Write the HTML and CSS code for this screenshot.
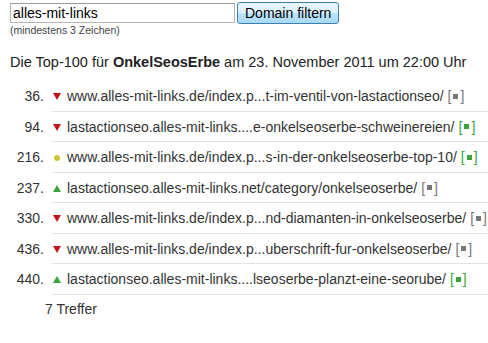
FILE: index.html
```html
<!DOCTYPE html>
<html lang="de">
<head>
  <meta charset="UTF-8">
  <title>Top-100 OnkelSeosErbe</title>
  <link rel="stylesheet" href="styles.css">
</head>
<body>

  <form class="filter" action="#" method="get">
    <div class="filter-row">
      <input type="text" name="domain" value="alles-mit-links">
      <button type="submit">Domain filtern</button>
    </div>
    <p class="hint">(mindestens 3 Zeichen)</p>
  </form>

  <h2 class="title">Die Top-100 für <b>OnkelSeosErbe</b> am 23. November 2011 um 22:00 Uhr</h2>

  <ol class="ranking">
    <li><span class="pos">36.</span><span class="entry"><i class="trend down"></i><a href="#">www.alles-mit-links.de/index.p...t-im-ventil-von-lastactionseo/</a> <span class="tag">[<span class="sq"></span>]</span></span></li>
    <li><span class="pos">94.</span><span class="entry"><i class="trend down"></i><a href="#">lastactionseo.alles-mit-links....e-onkelseoserbe-schweinereien/</a> <span class="tag on">[<span class="sq"></span>]</span></span></li>
    <li><span class="pos">216.</span><span class="entry"><i class="trend same"></i><a href="#">www.alles-mit-links.de/index.p...s-in-der-onkelseoserbe-top-10/</a> <span class="tag on">[<span class="sq"></span>]</span></span></li>
    <li><span class="pos">237.</span><span class="entry"><i class="trend up"></i><a href="#">lastactionseo.alles-mit-links.net/category/onkelseoserbe/</a> <span class="tag">[<span class="sq"></span>]</span></span></li>
    <li><span class="pos">330.</span><span class="entry"><i class="trend down"></i><a href="#">www.alles-mit-links.de/index.p...nd-diamanten-in-onkelseoserbe/</a> <span class="tag">[<span class="sq"></span>]</span></span></li>
    <li><span class="pos">436.</span><span class="entry"><i class="trend down"></i><a href="#">www.alles-mit-links.de/index.p...uberschrift-fur-onkelseoserbe/</a> <span class="tag">[<span class="sq"></span>]</span></span></li>
    <li><span class="pos">440.</span><span class="entry"><i class="trend up"></i><a href="#">lastactionseo.alles-mit-links....lseoserbe-planzt-eine-seorube/</a> <span class="tag on">[<span class="sq"></span>]</span></span></li>
  </ol>

  <p class="count">7 Treffer</p>

</body>
</html>
```

FILE: styles.css
```css
:root {
  --text: #333333;
  --line: #e2e2e2;
  --red: #c0161c;
  --green: #3aa33a;
  --yellow: #c8c832;
  --gray: #777777;
  --font: "Liberation Sans", Arial, sans-serif;
}
*, *::before, *::after {
  box-sizing: border-box;
  margin: 0;
  padding: 0;
}
body {
  font-family: var(--font);
  color: var(--text);
  background: #ffffff;
  padding: 2px 0 0 10px;
}
.filter-row {
  display: flex;
  align-items: center;
  gap: 2px;
}
.filter input {
  width: 225px;
  height: 20px;
  padding: 0 2px;
  font: 14px var(--font);
  color: #000;
  border: 1px solid #b5b5b5;
  border-top-color: #9a9a9a;
}
.filter button {
  height: 22px;
  padding: 0 7px;
  font: 14px var(--font);
  color: #000;
  border: 1px solid #3c7fb1;
  border-radius: 3px;
  background: linear-gradient(#eaf6fd 0%, #d9f0fc 50%, #bee6fd 51%, #a7d9f5 100%);
}
.hint {
  font-size: 10.5px;
  color: #444;
}
.title {
  font-size: 14.5px;
  font-weight: normal;
  color: #222;
  margin-top: 18px;
}
.title b {
  font-weight: bold;
}
.ranking {
  list-style: none;
  margin-top: 11px;
  margin-left: -10px;
}
.ranking li {
  display: flex;
  font-size: 14px;
  line-height: 16px;
}
.pos {
  width: 44px;
  text-align: right;
  padding: 7px 0;
}
.entry {
  flex: 1;
  display: flex;
  align-items: center;
  margin-left: 8px;
  padding: 7px 0 6.5px;
  border-bottom: 1px solid var(--line);
}
.entry a {
  color: var(--text);
  text-decoration: none;
}
.trend {
  display: inline-block;
  width: 8px;
  height: 7px;
  margin: 1px 6px 0 1px;
}
.trend.down {
  border-left: 4px solid transparent;
  border-right: 4px solid transparent;
  border-top: 7px solid var(--red);
}
.trend.up {
  border-left: 4px solid transparent;
  border-right: 4px solid transparent;
  border-bottom: 7px solid var(--green);
}
.trend.same {
  width: 6px;
  height: 6px;
  margin: 1px 7px 0 2px;
  border-radius: 50%;
  background: var(--yellow);
}
.tag {
  color: var(--gray);
  margin-left: 4px;
}
.tag .sq {
  display: inline-block;
  width: 5px;
  height: 5px;
  margin: 0 2px 2px;
  vertical-align: middle;
  background: var(--gray);
}
.tag.on {
  color: var(--green);
}
.tag.on .sq {
  background: var(--green);
}
.count {
  font-size: 14px;
  margin: 6px 0 0 35px;
}
```
